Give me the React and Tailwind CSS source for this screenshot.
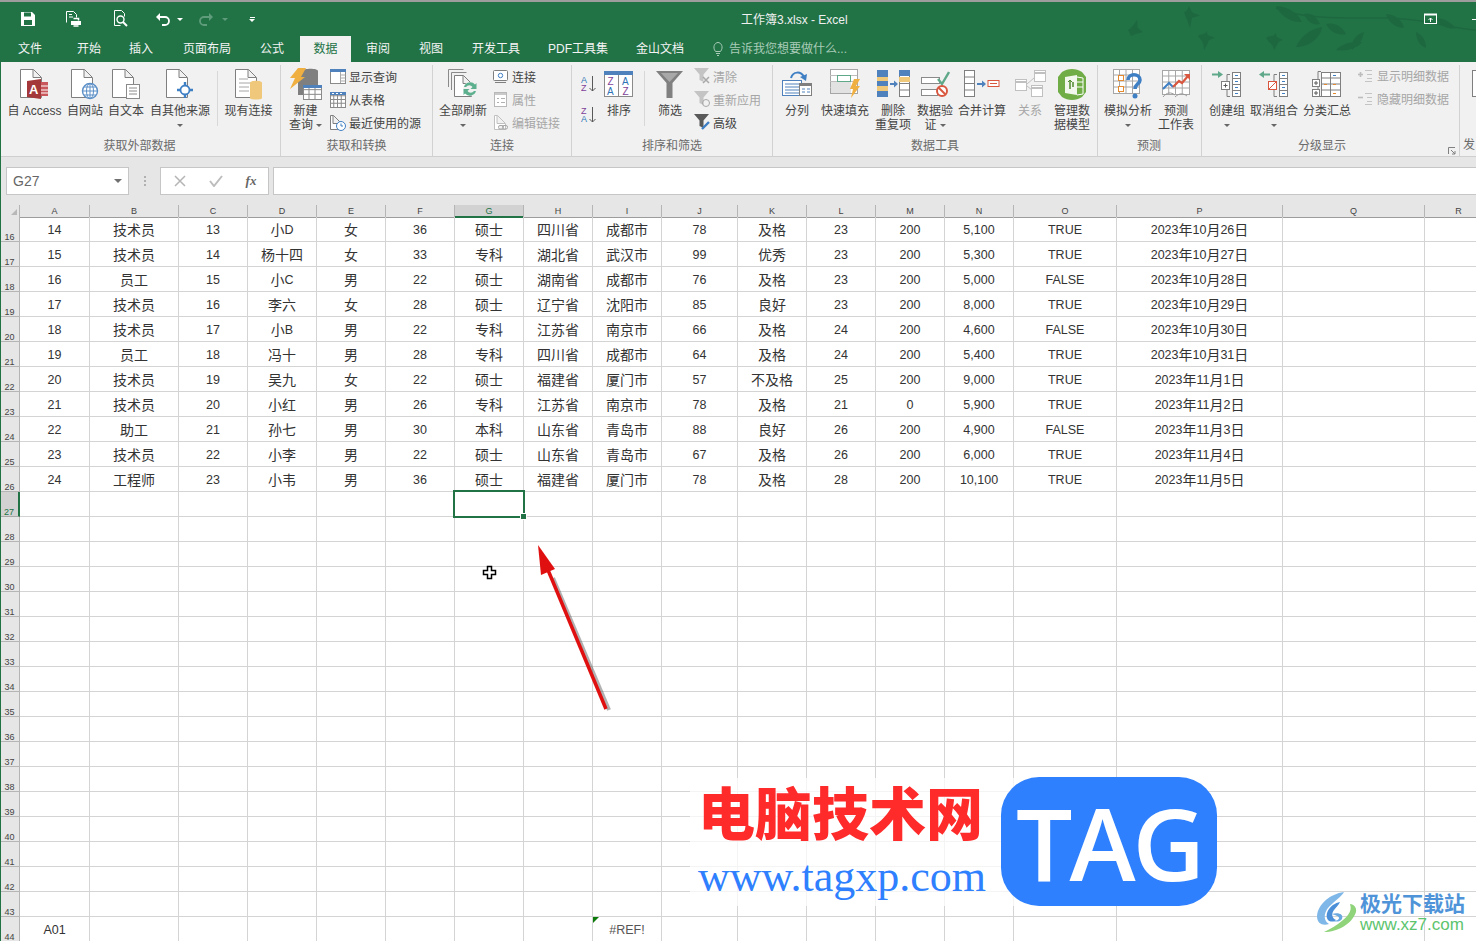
import React from "react";

const rowGrid =
  "grid grid-cols-[20px_70px_89px_69px_69px_69px_69px_69px_69px_69px_76px_69px_69px_69px_69px_103px_166px_142px_68px]";

const headers = ["A", "B", "C", "D", "E", "F", "G", "H", "I", "J", "K", "L", "M", "N", "O", "P", "Q", "R"];

const data = [
  ["14", "技术员", "13", "小D", "女", "36", "硕士", "四川省", "成都市", "78", "及格", "23", "200", "5,100", "TRUE", "2023年10月26日"],
  ["15", "技术员", "14", "杨十四", "女", "33", "专科", "湖北省", "武汉市", "99", "优秀", "23", "200", "5,300", "TRUE", "2023年10月27日"],
  ["16", "员工", "15", "小C", "男", "22", "硕士", "湖南省", "成都市", "76", "及格", "23", "200", "5,000", "FALSE", "2023年10月28日"],
  ["17", "技术员", "16", "李六", "女", "28", "硕士", "辽宁省", "沈阳市", "85", "良好", "23", "200", "8,000", "TRUE", "2023年10月29日"],
  ["18", "技术员", "17", "小B", "男", "22", "专科", "江苏省", "南京市", "66", "及格", "24", "200", "4,600", "FALSE", "2023年10月30日"],
  ["19", "员工", "18", "冯十", "男", "28", "专科", "四川省", "成都市", "64", "及格", "24", "200", "5,400", "TRUE", "2023年10月31日"],
  ["20", "技术员", "19", "吴九", "女", "22", "硕士", "福建省", "厦门市", "57", "不及格", "25", "200", "9,000", "TRUE", "2023年11月1日"],
  ["21", "技术员", "20", "小红", "男", "26", "专科", "江苏省", "南京市", "78", "及格", "21", "0", "5,900", "TRUE", "2023年11月2日"],
  ["22", "助工", "21", "孙七", "男", "30", "本科", "山东省", "青岛市", "88", "良好", "26", "200", "4,900", "FALSE", "2023年11月3日"],
  ["23", "技术员", "22", "小李", "男", "22", "硕士", "山东省", "青岛市", "67", "及格", "26", "200", "6,000", "TRUE", "2023年11月4日"],
  ["24", "工程师", "23", "小韦", "男", "36", "硕士", "福建省", "厦门市", "78", "及格", "28", "200", "10,100", "TRUE", "2023年11月5日"],
];

const rowNumbers = Array.from({ length: 29 }, (_, i) => 16 + i);

// digits are a bit narrower than the chinese in the sheet
function Mixed({ text }) {
  return text.split(/([\u4e00-\u9fff]+)/).map((part, i) =>
    i % 2 ? (
      <span key={i} className="text-[14px]">
        {part}
      </span>
    ) : (
      <span key={i}>{part}</span>
    )
  );
}

function Doc({ x = 0, y = 0, w = 21, h = 28, stroke = "#7f7f7f" }) {
  return (
    <path
      d={`M${x + 0.5} ${y + 0.5}h${w - 8}l8 8v${h - 8}h-${w}z M${x + w - 8} ${y + 0.5}v8h8`}
      fill="#fff"
      stroke={stroke}
    />
  );
}

function TableIcon({ x, y, w, h, cols = 3, rows = 3, head = "#4f81bd", stroke = "#8a8a8a" }) {
  const lines = [];
  for (let i = 1; i < cols; i++) lines.push(<path key={"c" + i} d={`M${x + (w * i) / cols} ${y}v${h}`} stroke={stroke} />);
  for (let i = 1; i < rows; i++) lines.push(<path key={"r" + i} d={`M${x} ${y + (h * i) / rows}h${w}`} stroke={stroke} />);
  return (
    <g>
      <rect x={x + 0.5} y={y + 0.5} width={w} height={h} fill="#fff" stroke={stroke} />
      {lines}
      {head && <rect x={x} y={y} width={w + 1} height={3} fill={head} />}
    </g>
  );
}

const Svg = ({ w, h, children }) => (
  <svg width={w} height={h} viewBox={`0 0 ${w} ${h}`} fill="none" className="block shrink-0">
    {children}
  </svg>
);

const AccessIcon = () => (
  <Svg w={29} h={31}>
    <Doc w={21} h={28} />
    <path d="M21 13h7v14h-7z" fill="#c9565a" />
    <path d="M21 17h7M21 21h7M21 24h7" stroke="#fff" />
    <path d="M7 12l14-2v20l-14-2z" fill="#a4373a" />
    <text x="9" y="25" fontSize="13" fontWeight="700" fill="#fff" fontFamily="Liberation Sans">A</text>
  </Svg>
);
const WebIcon = () => (
  <Svg w={29} h={31}>
    <Doc w={21} h={28} />
    <circle cx="19" cy="22" r="7.5" fill="#fff" stroke="#5b8fc7" strokeWidth="1.4" />
    <path d="M11.5 22h15M19 14.5v15M13 18h12M13 26h12" stroke="#5b8fc7" />
    <ellipse cx="19" cy="22" rx="3.5" ry="7.5" stroke="#5b8fc7" />
  </Svg>
);
const TextIcon = () => (
  <Svg w={29} h={31}>
    <Doc w={21} h={28} />
    <rect x="14.5" y="15.5" width="13" height="14" fill="#fff" stroke="#8a8a8a" />
    <path d="M17 19h8M17 22h8M17 25h8" stroke="#8a8a8a" />
  </Svg>
);
const OtherIcon = () => (
  <Svg w={28} h={31}>
    <Doc w={21} h={28} />
    <circle cx="19" cy="21" r="4.5" fill="#fff" stroke="#3f7fc4" strokeWidth="1.8" />
    <path d="M19 13v4M19 25v4M11 21h4M23 21h4" stroke="#3f7fc4" strokeWidth="2.4" />
  </Svg>
);
const ExistingIcon = () => (
  <Svg w={28} h={31}>
    <Doc w={21} h={28} />
    <path d="M4 10h9M4 14h13M4 18h10M4 22h10" stroke="#a6a6a6" />
    <path d="M15 14c0-3 12-3 12 0v15c0 2-12 2-12 0z" fill="#efc87c" />
  </Svg>
);
const NewQueryIcon = () => (
  <Svg w={33} h={33}>
    <path d="M14 3c0-3 15-3 15 0v24H9V8z" fill="#7f7f7f" />
    <path d="M9 0h8l-5 9h4L1 21l5-11H1z" fill="#f0b041" />
    <TableIcon x={14} y={17} w={18} h={14} cols={3} rows={3} head="#4f81bd" stroke="#8a8a8a" />
  </Svg>
);
const ShowQueryIcon = () => (
  <Svg w={16} h={16}>
    <TableIcon x={0} y={0} w={15} h={14} cols={1} rows={1} />
    <path d="M10.5 3v11M10.5 6h5M10.5 9h5M10.5 12h5" stroke="#aaa" />
  </Svg>
);
const FromTableIcon = () => (
  <Svg w={16} h={16}>
    <TableIcon x={0} y={0} w={15} h={15} cols={4} rows={4} />
    <path d="M2 1.5h2M6 1.5h2M10 1.5h2" stroke="#fff" />
  </Svg>
);
const RecentIcon = () => (
  <Svg w={16} h={16}>
    <Doc w={11} h={14} />
    <circle cx="11" cy="11" r="4.5" fill="#fff" stroke="#3f7fc4" />
    <path d="M11 8.5V11h2" stroke="#3f7fc4" />
  </Svg>
);
const RefreshAllIcon = () => (
  <Svg w={31} h={31}>
    <path d="M.5 18V.5h15M3.5 21V3.5h15" stroke="#8a8a8a" />
    <Doc x={6} y={6} w={17} h={21} />
    <circle cx="22" cy="20" r="7" fill="#f1f1f1" />
    <path d="M16 18a6.5 6.5 0 0 1 11-2.5l1.5-1.5v6h-6l2-2a4 4 0 0 0-6.500 0z" fill="#5cb08e" />
    <path d="M28 22a6.500 6.500 0 0 1-11 2.500l-1.500 1.500v-6h6l-2 2a4 4 0 0 0 6.500 0z" fill="#5cb08e" />
  </Svg>
);
const ConnectIcon = () => (
  <Svg w={16} h={14}>
    <rect x=".5" y=".5" width="14" height="10" rx="1" fill="#fff" stroke="#7f7f7f" />
    <circle cx="7.500" cy="5.500" r="2.200" stroke="#3f7fc4" />
    <path d="M2 12.500h11" stroke="#7f7f7f" />
  </Svg>
);
const PropsIcon = () => (
  <Svg w={16} h={16}>
    <rect x="1.500" y=".5" width="12" height="14" fill="#fff" stroke="#b8b8b8" />
    <rect x="2" y="1" width="11" height="2" fill="#c9c9c9" />
    <path d="M4 6.500h2M8 6.500h4M4 10.500h2M8 10.500h4" stroke="#b0b0b0" />
  </Svg>
);
const EditLinkIcon = () => (
  <Svg w={16} h={16}>
    <Doc x={1} w={11} h={14} stroke="#c0c0c0" />
    <rect x="5.500" y="10.500" width="5" height="3.500" rx="1.500" stroke="#a8a8a8" fill="#f1f1f1" />
    <rect x="9.500" y="10.500" width="5" height="3.500" rx="1.500" stroke="#a8a8a8" />
  </Svg>
);
const SortAzIcon = ({ top, bottom, topC, bottomC }) => (
  <Svg w={16} h={17}>
    <text x="0" y="8" fontSize="9" fontFamily="Liberation Sans" fill={topC}>{top}</text>
    <text x="0" y="16" fontSize="9" fontFamily="Liberation Sans" fill={bottomC}>{bottom}</text>
    <path d="M11.500 1v15M8.500 13l3 3 3-3" stroke="#595959" />
  </Svg>
);
const SortIcon = () => (
  <Svg w={30} h={27}>
    <rect x=".5" y="1.500" width="28" height="24" fill="#fff" stroke="#8a8a8a" />
    <path d="M14.500 1v24" stroke="#8a8a8a" />
    <rect x="0" y="0" width="29" height="4" fill="#4f81bd" />
    <text x="3.500" y="14" fontSize="10" fontFamily="Liberation Sans" fill="#7e3f98">Z</text>
    <text x="3" y="24" fontSize="10" fontFamily="Liberation Sans" fill="#2f74b5">A</text>
    <text x="18" y="14" fontSize="10" fontFamily="Liberation Sans" fill="#2f74b5">A</text>
    <text x="18.500" y="24" fontSize="10" fontFamily="Liberation Sans" fill="#7e3f98">Z</text>
  </Svg>
);
const FunnelIcon = () => (
  <Svg w={28} h={29}>
    <path d="M0 1h27L16.500 13v15h-6V13z" fill="#808080" />
    <path d="M5 3h17l-8.500 9z" fill="#a8a8a8" />
  </Svg>
);
const SmallFunnel = ({ color, children }) => (
  <Svg w={17} h={17}>
    <path d="M0 0h15L9.500 6.500V14l-4-2V6.500z" fill={color} />
    {children}
  </Svg>
);
const SplitIcon = () => (
  <Svg w={31} h={28}>
    <rect x=".5" y="10.500" width="19" height="15" fill="#fff" stroke="#4f81bd" />
    <path d="M3 14h14M3 17h14M3 20h14M3 23h14" stroke="#4f81bd" />
    <rect x="17.500" y="13.500" width="12" height="12" fill="#fff" stroke="#7f7f7f" />
    <rect x="17.500" y="13.500" width="12" height="2.500" fill="#7f7f7f" />
    <path d="M20 19h3M25 19h3M20 22h3M25 22h3" stroke="#4f81bd" />
    <path d="M9 8c2-7 10-7 13-1" stroke="#3f7fc4" strokeWidth="2" />
    <path d="M18 7l6 4 1-7z" fill="#3f7fc4" />
  </Svg>
);
const FlashIcon = () => (
  <Svg w={31} h={30}>
    <rect x=".5" y=".5" width="27" height="24" fill="#fff" stroke="#a6a6a6" />
    <path d="M0 6.500h27M0 12.500h27M0 18.500h27" stroke="#bdbdbd" />
    <rect x="7.500" y="6.500" width="13" height="6" fill="#fff" stroke="#5fa98a" />
    <rect x="1" y="13" width="20" height="11" fill="#e2e2e2" />
    <path d="M24 10h6l-4 7h4L21 29l2-9h-3z" fill="#f0b041" />
  </Svg>
);
const DedupeIcon = () => (
  <Svg w={33} h={28}>
    <rect x="0" y="0" width="11" height="27" fill="#4f81bd" />
    <rect x="0" y="7" width="11" height="4" fill="#f0c87a" />
    <rect x="0" y="16" width="11" height="5" fill="#f0c87a" />
    <rect x="22.500" y=".5" width="10" height="26" fill="#fff" stroke="#7f7f7f" />
    <rect x="22" y="0" width="11" height="6" fill="#4f81bd" />
    <rect x="22" y="7" width="11" height="5" fill="#f0c87a" />
    <path d="M23 13.500h10M23 20h10" stroke="#7f7f7f" />
    <path d="M13 14h5" stroke="#4f81bd" strokeWidth="2" />
    <path d="M17 10.500l4 3.500-4 3.500z" fill="#4f81bd" />
  </Svg>
);
const ValidIcon = () => (
  <Svg w={29} h={27}>
    <rect x=".5" y="6.500" width="18" height="6" fill="#fff" stroke="#8a8a8a" />
    <rect x=".5" y="18.500" width="16" height="6" fill="#fff" stroke="#8a8a8a" />
    <path d="M17 8l4 5L28 1" stroke="#5fa98a" strokeWidth="2.400" />
    <circle cx="21" cy="20" r="5" fill="#fff" stroke="#d9573f" strokeWidth="2" />
    <path d="M17.500 16.500l7 7" stroke="#d9573f" strokeWidth="2" />
  </Svg>
);
const ConsolidateIcon = () => (
  <Svg w={36} h={28}>
    <rect x=".5" y=".5" width="10" height="26" fill="#fff" stroke="#7f7f7f" />
    <path d="M1 7h10M1 13.500h10M1 20h10" stroke="#7f7f7f" />
    <path d="M13 14h6" stroke="#4f81bd" strokeWidth="2" />
    <path d="M18 10.500l4 3.500-4 3.500z" fill="#4f81bd" />
    <rect x="24" y="10.500" width="11" height="6" fill="#fff" stroke="#d9573f" />
    <path d="M26 13.500h7" stroke="#d9573f" />
  </Svg>
);
const RelIcon = () => (
  <Svg w={31} h={28}>
    <g fill="#fff" stroke="#c0c0c0">
      <rect x=".5" y="9.500" width="11" height="11" />
      <rect x="19.500" y=".5" width="11" height="11" />
      <rect x="16.500" y="15.500" width="11" height="11" />
    </g>
    <path d="M1 12h11M20 3h11M17 18h11" stroke="#c0c0c0" strokeWidth="2" />
    <path d="M12 14l7-6M12 16l5 4" stroke="#c0c0c0" />
  </Svg>
);
const ModelIcon = () => (
  <Svg w={30} h={31}>
    <path d="M5 3c6-4 14-4 20 0l4 5v15l-4 5c-6 4-14 4-20 0l-4-5V8z" fill="#70ad47" />
    <path d="M8 8l12-2v20L8 24z" fill="#fff" opacity=".9" />
    <path d="M20 8l6 1v16l-6 1M20 13h6M20 18h6" stroke="#fff" />
    <path d="M13 20v-8M16 18v-5" stroke="#4f8a2f" strokeWidth="1.500" />
    <path d="M11 13l2-2 2 2" stroke="#4f8a2f" />
  </Svg>
);
const WhatIfIcon = () => (
  <Svg w={30} h={31}>
    <TableIcon x={0} y={0} w={26} h={24} cols={4} rows={4} head={null} stroke="#a6a6a6" />
    <rect x="5.500" y="6.500" width="5" height="5" fill="#fff" stroke="#e58a2e" />
    <rect x="5.500" y="17.500" width="5" height="5" fill="#fff" stroke="#e58a2e" />
    <path d="M15 11c0-7 12-7 12 0 0 4-5 4-5 9" stroke="#3f7fc4" strokeWidth="3.600" />
    <circle cx="22" cy="27" r="2.500" fill="#3f7fc4" />
  </Svg>
);
const ForecastIcon = () => (
  <Svg w={29} h={29}>
    <TableIcon x={0} y={0} w={27} h={24} cols={4} rows={4} head={null} stroke="#a6a6a6" />
    <path d="M1 19l6-6 4 4" stroke="#3f7fc4" strokeWidth="2" />
    <path d="M11 17l6-6 3 2 6-7" stroke="#d9573f" strokeWidth="2.200" />
    <path d="M22 4h6v6z" fill="#d9573f" />
    <path d="M1 27c4-5 8-5 12-2M13 27c4-4 8-4 12-1" stroke="#9a9a9a" />
  </Svg>
);
const OutlineCol = () => (
  <g>
    <path d="M18 3.500h-3v22h3" stroke="#7f7f7f" />
    <rect x="20.500" y="1.500" width="8" height="24" fill="#fff" stroke="#7f7f7f" />
    <path d="M21 7.500h8M21 13.500h8M21 19.500h8" stroke="#7f7f7f" />
    <path d="M23 4.500h3M23 10.500h3M23 16.500h3M23 22.500h3" stroke="#3f7fc4" />
  </g>
);
const GroupIcon = () => (
  <Svg w={30} h={27}>
    <OutlineCol />
    <path d="M0 3.500h7" stroke="#5fa98a" strokeWidth="2" />
    <path d="M6 0l5 3.500L6 7z" fill="#5fa98a" />
    <rect x="9.500" y="10.500" width="8" height="8" fill="#fff" stroke="#7f7f7f" />
    <path d="M11.500 14.500h4M13.500 12.500v4" stroke="#595959" />
  </Svg>
);
const UngroupIcon = () => (
  <Svg w={30} h={27}>
    <OutlineCol />
    <path d="M4 3.500h7" stroke="#5fa98a" strokeWidth="2" />
    <path d="M5 0L0 3.500 5 7z" fill="#5fa98a" />
    <rect x="9.500" y="10.500" width="8" height="8" fill="#fff" stroke="#d9573f" />
    <path d="M10 18l7-7" stroke="#d9573f" />
  </Svg>
);
const SubtotalIcon = () => (
  <Svg w={30} h={27}>
    <path d="M9 .5H6v25h3" stroke="#7f7f7f" />
    <TableIcon x={9} y={1} w={19} h={24} cols={2} rows={4} head={null} stroke="#7f7f7f" />
    <rect x=".5" y="8.500" width="7" height="7" fill="#fff" stroke="#7f7f7f" />
    <rect x=".5" y="18.500" width="7" height="7" fill="#fff" stroke="#7f7f7f" />
    <path d="M2 12h4M4 10v4M2 22h4M4 20v4" stroke="#595959" />
    <path d="M21 13.500h3M21 22.500h3M12 13.500h3" stroke="#e58a2e" />
    <path d="M21 4.500h3" stroke="#3f7fc4" />
  </Svg>
);
const DetailIcon = ({ plus }) => (
  <Svg w={15} h={14}>
    <path d="M0 5.500h5" stroke="#bdbdbd" strokeWidth="1.600" />
    {plus && <path d="M2.500 3v5" stroke="#bdbdbd" strokeWidth="1.600" />}
    <path d="M7 1.500h7M9 5.500h5M9 9.500h5M7 12.500h7" stroke="#c4c4c4" />
  </Svg>
);

function Caret() {
  return <span className="inline-block w-0 h-0 border-x-[3px] border-x-transparent border-t-[3px] border-t-[#666] align-middle" />;
}

function Big({ className, icon, lines, caret, dim }) {
  return (
    <div className={`flex flex-col items-center shrink-0 ${className}`}>
      <div className="h-[38px] flex items-center justify-center">{icon}</div>
      <div className={`pt-[1px] text-[12px] leading-[14px] text-center whitespace-nowrap ${dim ? "text-[#a6a6a6]" : "text-[#444]"}`}>
        {lines.map((l, i) => (
          <div key={i}>
            {l}
            {caret === "inline" && i === lines.length - 1 && (
              <span className="ml-[3px]">
                <Caret />
              </span>
            )}
          </div>
        ))}
        {caret === "below" && (
          <div className="leading-[14px]">
            <Caret />
          </div>
        )}
      </div>
    </div>
  );
}

function Small({ icon, label, dim }) {
  return (
    <div className="h-[23px] flex items-center whitespace-nowrap">
      <div className="w-[19px] shrink-0">{icon}</div>
      <span className={`text-[12px] pt-[2px] ${dim ? "text-[#a6a6a6]" : "text-[#444]"}`}>{label}</span>
    </div>
  );
}

function Group({ className, label, labelClass = "", children }) {
  return (
    <div className={`shrink-0 flex flex-col border-r border-[#d2d2d2] ${className}`}>
      <div className="h-[72px] flex">{children}</div>
      <div className={`h-[16px] pt-[1px] leading-[16px] text-[12px] text-[#6b6b6b] text-center whitespace-nowrap ${labelClass}`}>{label}</div>
    </div>
  );
}

const Leaf = ({ d }) => <path d={d} fill="#1e6840" />;

function TitleBar() {
  return (
    <div className="relative h-[34px] flex items-center text-white">
      <div className="w-[741px] shrink-0 flex items-center">
        <div className="ml-[20px]">
          <Svg w={16} h={16}>
            <path d="M1 1h11l3 3v11H1z" fill="#fff" />
            <rect x="4" y="1.500" width="7" height="4" fill="#217346" />
            <rect x="4" y="9" width="8" height="5" fill="#217346" />
          </Svg>
        </div>
        <div className="ml-[28px]">
          <Svg w={18} h={18}>
            <path d="M2.500 12.500V1.500h7l3 3v3" stroke="#fff" />
            <path d="M5 4.500h3M5 7h4" stroke="#fff" />
            <rect x="7" y="11" width="10" height="4" fill="#fff" />
            <path d="M9.500 8.500h5v2M9.500 16h5" stroke="#fff" strokeWidth="1.500" />
          </Svg>
        </div>
        <div className="ml-[30px]">
          <Svg w={17} h={18}>
            <path d="M2.500 15.500V.5h7l3 3v3M2.500 15.500h6" stroke="#fff" />
            <circle cx="8.500" cy="9.500" r="3.500" stroke="#fff" strokeWidth="1.400" />
            <path d="M11 12l4 4" stroke="#fff" strokeWidth="2" />
          </Svg>
        </div>
        <div className="ml-[26px]">
          <Svg w={15} h={14}>
            <path d="M4 5h6a3.500 3.500 0 0 1 0 8H7" stroke="#fff" strokeWidth="1.800" />
            <path d="M5 1L1 5l4 4z" fill="#fff" />
          </Svg>
        </div>
        <div className="ml-[7px] w-0 h-0 border-x-[3px] border-x-transparent border-t-[3px] border-t-white" />
        <div className="ml-[16px]">
          <Svg w={15} h={14}>
            <path d="M11 5H5a3.500 3.500 0 0 0 0 8h3" stroke="#5f9c7b" strokeWidth="1.800" />
            <path d="M10 1l4 4-4 4z" fill="#5f9c7b" />
          </Svg>
        </div>
        <div className="ml-[8px] w-0 h-0 border-x-[3px] border-x-transparent border-t-[3px] border-t-[#5f9c7b]" />
        <div className="ml-[21px] flex flex-col items-center gap-[1px]">
          <div className="w-[5px] h-[1px] bg-white" />
          <div className="w-0 h-0 border-x-[3px] border-x-transparent border-t-[3px] border-t-white" />
        </div>
      </div>
      <span className="pt-[2px] text-[12px] text-[#f0f0f0]">工作簿3.xlsx - Excel</span>
      {/* background art of the office theme */}
      <svg width="350" height="60" viewBox="0 0 350 60" className="absolute left-[1126px] top-0 pointer-events-none">
        <Leaf d="M2 28c4-2 6-6 9-10 1 4 0 6 1 8l5 4c-5 1-9 3-12 4z" />
        <Leaf d="M58 10c3 0 4-4 5-6 2 4 3 8 8 8l3 2c-3 0-5 1-8 2l-2 10c-2-4-2-8-4-10z" />
        <Leaf d="M72 34c3-3 6 0 9-5 0 3 1 5 4 5l4 2c-4 1-7 2-7 5l-4 7c0-4-1-8-3-10z" />
        <Leaf d="M140 36c3-3 6 0 10-5 0 3 1 4 3 5l4 2c-3 1-5 2-6 5l-3 5c-1-4-2-6-5-8z" />
        <Leaf d="M150 4c8 0 20 4 26 16-10 1-22-6-26-16z" />
        <Leaf d="M178 12c6-2 12 2 16 10-8 2-14-4-16-10z" />
        <Leaf d="M170 45c4-10 14-18 26-20-1 10-12 20-26 20z" />
        <Leaf d="M200 22c8-2 16 2 20 10-8 2-16-2-20-10z" />
        <Leaf d="M238 30c-2 10-4 10-12 18-2-8 4-16 12-18z" />
        <Leaf d="M210 48c8-8 16-8 26-8-4 6-16 10-26 8z" />
        <Leaf d="M260 12c6 0 16 4 18 14-8 0-16-6-18-14z" />
        <Leaf d="M290 30c4 2 10 6 10 16-6-2-10-8-10-16z" />
        <Leaf d="M310 16c8 0 14 4 20 10-8 2-16-2-20-10z" />
        <path d="M150 6c30 12 70 10 110 10s60 10 90 12" stroke="#1e6840" strokeWidth="1.500" fill="none" />
      </svg>
      <div className="absolute left-[1424px] top-[10px]">
        <Svg w={14} h={14}>
          <rect x=".5" y="2.500" width="12" height="9" stroke="#fff" />
          <path d="M0 2.500h13" stroke="#fff" strokeWidth="2" />
          <path d="M6.500 10V6M4.500 8l2-2 2 2" stroke="#fff" />
        </Svg>
      </div>
      <div className="absolute right-0 top-[17px] w-[4px] h-[1px] bg-white" />
    </div>
  );
}

function Tab({ className, children, active }) {
  return (
    <div
      className={`shrink-0 h-full flex items-center justify-center text-[12px] ${className} ${
        active ? "bg-[#f1f1f1] text-[#217346]" : "text-[#f4f4f4]"
      }`}
    >
      {children}
    </div>
  );
}

function TabBar() {
  return (
    <div className="h-[26px] flex">
      <Tab className="w-[60px]">文件</Tab>
      <Tab className="w-[58px]">开始</Tab>
      <Tab className="w-[46px]">插入</Tab>
      <Tab className="w-[86px]">页面布局</Tab>
      <Tab className="w-[44px]">公式</Tab>
      <div className="w-[6px] shrink-0" />
      <Tab className="w-[51px]" active>
        数据
      </Tab>
      <Tab className="w-[54px]">审阅</Tab>
      <Tab className="w-[52px]">视图</Tab>
      <Tab className="w-[78px]">开发工具</Tab>
      <Tab className="w-[86px]">PDF工具集</Tab>
      <Tab className="w-[78px]">金山文档</Tab>
      <div className="ml-[14px] flex items-center gap-[6px] text-[12px] text-[#a9cbb7]">
        <Svg w={10} h={14}>
          <path d="M2.500 9.500C-1 5 2 .5 5 .5S11 5 7.500 9.500zM3 11.500h4M4 13.500h2" stroke="#a9cbb7" />
        </Svg>
        <span>告诉我您想要做什么...</span>
      </div>
    </div>
  );
}

function Ribbon() {
  return (
    <div className="h-[95px] bg-[#f1f1f1] border-b border-[#cfcfcf] pt-[3px] flex overflow-hidden">
      <Group className="w-[281px] pl-[4px]" label="获取外部数据" labelClass="pr-[5px]">
        <Big className="w-[61px]" icon={<AccessIcon />} lines={["自 Access"]} />
        <Big className="w-[40px]" icon={<WebIcon />} lines={["自网站"]} />
        <Big className="w-[42px]" icon={<TextIcon />} lines={["自文本"]} />
        <Big className="w-[66px]" icon={<OtherIcon />} lines={["自其他来源"]} caret="below" />
        <div className="w-[9px] shrink-0 flex justify-center pt-[6px]">
          <div className="w-px h-[55px] bg-[#d8d8d8]" />
        </div>
        <Big className="w-[53px]" icon={<ExistingIcon />} lines={["现有连接"]} />
      </Group>
      <Group className="w-[152px]" label="获取和转换">
        <Big className="w-[49px]" icon={<NewQueryIcon />} lines={["新建", "查询"]} caret="inline" />
        <div>
          <Small icon={<ShowQueryIcon />} label="显示查询" />
          <Small icon={<FromTableIcon />} label="从表格" />
          <Small icon={<RecentIcon />} label="最近使用的源" />
        </div>
      </Group>
      <Group className="w-[139px]" label="连接">
        <Big className="w-[60px]" icon={<RefreshAllIcon />} lines={["全部刷新"]} caret="below" />
        <div>
          <Small icon={<ConnectIcon />} label="连接" />
          <Small icon={<PropsIcon />} label="属性" dim />
          <Small icon={<EditLinkIcon />} label="编辑链接" dim />
        </div>
      </Group>
      <Group className="w-[201px]" label="排序和筛选">
        <div className="w-[30px] shrink-0 pl-[9px] pt-[10px] flex flex-col gap-[14px]">
          <SortAzIcon top="A" bottom="Z" topC="#2f74b5" bottomC="#7e3f98" />
          <SortAzIcon top="Z" bottom="A" topC="#7e3f98" bottomC="#2f74b5" />
        </div>
        <Big className="w-[34px]" icon={<SortIcon />} lines={["排序"]} />
        <div className="w-[16px] shrink-0 flex justify-center pt-[6px]">
          <div className="w-px h-[55px] bg-[#d8d8d8]" />
        </div>
        <Big className="w-[36px]" icon={<FunnelIcon />} lines={["筛选"]} />
        <div className="ml-[6px]">
          <Small
            icon={
              <SmallFunnel color="#c4c4c4">
                <path d="M9 9l6 6M15 9l-6 6" stroke="#a8a8a8" strokeWidth="1.500" />
              </SmallFunnel>
            }
            label="清除"
            dim
          />
          <Small
            icon={
              <SmallFunnel color="#c4c4c4">
                <circle cx="12" cy="12" r="3.500" stroke="#a8a8a8" />
              </SmallFunnel>
            }
            label="重新应用"
            dim
          />
          <Small
            icon={
              <SmallFunnel color="#595959">
                <path d="M8 15l7-7" stroke="#3f7fc4" strokeWidth="2.400" />
              </SmallFunnel>
            }
            label="高级"
          />
        </div>
      </Group>
      <Group className="w-[325px]" label="数据工具">
        <Big className="w-[48px]" icon={<SplitIcon />} lines={["分列"]} />
        <Big className="w-[48px]" icon={<FlashIcon />} lines={["快速填充"]} />
        <Big className="w-[48px]" icon={<DedupeIcon />} lines={["删除", "重复项"]} />
        <Big className="w-[36px]" icon={<ValidIcon />} lines={["数据验", "证"]} caret="inline" />
        <Big className="w-[58px]" icon={<ConsolidateIcon />} lines={["合并计算"]} />
        <Big className="w-[38px]" icon={<RelIcon />} lines={["关系"]} dim />
        <Big className="w-[46px]" icon={<ModelIcon />} lines={["管理数", "据模型"]} />
      </Group>
      <Group className="w-[104px] pl-[3px]" label="预测" labelClass="pr-[4px]">
        <Big className="w-[54px]" icon={<WhatIfIcon />} lines={["模拟分析"]} caret="below" />
        <Big className="w-[42px]" icon={<ForecastIcon />} lines={["预测", "工作表"]} />
      </Group>
      <Group className="w-[258px] pl-[5px] relative" label="分级显示" labelClass="pr-[22px]">
        <Big className="w-[40px]" icon={<GroupIcon />} lines={["创建组"]} caret="below" />
        <Big className="w-[54px]" icon={<UngroupIcon />} lines={["取消组合"]} caret="below" />
        <Big className="w-[52px]" icon={<SubtotalIcon />} lines={["分类汇总"]} />
        <div className="ml-[5px] -mt-[1px]">
          <Small icon={<DetailIcon plus />} label="显示明细数据" dim />
          <Small icon={<DetailIcon />} label="隐藏明细数据" dim />
        </div>
        <div className="absolute right-[3px] bottom-[1px]">
          <Svg w={8} h={8}>
            <path d="M.5 7V.5H7M3 3l4 4M7 4v3H4" stroke="#808080" />
          </Svg>
        </div>
      </Group>
      <div className="shrink-0 flex flex-col pl-[3px]">
        <div className="h-[72px] pl-[9px] pt-[5px]">
          <div className="w-[10px] h-[27px] border border-[#7f7f7f] bg-white" />
        </div>
        <div className="text-[12px] leading-[16px] text-[#6b6b6b]">发</div>
      </div>
    </div>
  );
}

function FormulaBar() {
  return (
    <div className="h-[48px] bg-[#e6e6e6] pt-[10px] pl-[6px] flex items-start">
      <div className="w-[123px] h-[28px] bg-white border border-[#c6c6c6] flex items-center justify-between pl-[6px] pr-[6px]">
        <span className="text-[14px] text-[#666]">G27</span>
        <div className="w-0 h-0 border-x-[4px] border-x-transparent border-t-[4px] border-t-[#707070]" />
      </div>
      <div className="w-[31px] shrink-0 h-[28px] flex flex-col items-center justify-center gap-[2px]">
        <div className="w-[2px] h-[2px] bg-[#b0b0b0]" />
        <div className="w-[2px] h-[2px] bg-[#b0b0b0]" />
        <div className="w-[2px] h-[2px] bg-[#b0b0b0]" />
      </div>
      <div className="w-[109px] h-[28px] bg-white border border-[#c6c6c6] flex items-center text-[#b0b0b0]">
        <div className="w-[37px] flex justify-center">
          <Svg w={12} h={12}>
            <path d="M1 1l10 10M11 1L1 11" stroke="#b5b5b5" strokeWidth="1.500" />
          </Svg>
        </div>
        <div className="w-[36px] flex justify-center">
          <Svg w={14} h={12}>
            <path d="M1 6l4 5 8-10" stroke="#bdbdbd" strokeWidth="2" />
          </Svg>
        </div>
        <div className="w-[34px] text-center font-['Liberation_Serif',serif] italic font-bold text-[13px] text-[#666]">fx</div>
      </div>
      <div className="ml-[4px] flex-1 h-[28px] bg-white border border-[#c6c6c6] border-r-0" />
    </div>
  );
}

function SheetGrid() {
  return (
    <div className="w-[1496px]">
      <div className={`${rowGrid} h-[12px] bg-[#e6e6e6] border-b border-[#9c9c9c] box-content -mb-px`}>
        <div className="border-r border-[#b5b5b5] relative">
          <div className="absolute right-[2px] bottom-[2px] w-0 h-0 border-l-[6px] border-l-transparent border-b-[6px] border-b-[#b8b8b8]" />
        </div>
        {headers.map((h) => (
          <div
            key={h}
            className={`border-r border-[#b5b5b5] text-center text-[9px] leading-[12px] text-[#444] ${
              h === "G" ? "bg-[#d2d2d2] text-[#217346] relative" : ""
            }`}
          >
            {h}
            {h === "G" && <div className="absolute left-0 right-0 bottom-[-1px] h-[2px] bg-[#217346]" />}
          </div>
        ))}
      </div>
      {rowNumbers.map((n, r) => {
        const row = data[r];
        return (
          <div key={n} className={`${rowGrid} h-[25px]`}>
            <div
              className={`border-b border-r text-[9px] text-center leading-[8px] pt-[16px] ${
                n === 27 ? "bg-[#d2d2d2] text-[#217346] border-[#217346] border-r-2 border-b-[#a8a8a8]" : "bg-[#e6e6e6] text-[#444] border-[#b5b5b5]"
              }`}
            >
              {n}
            </div>
            {headers.map((h, c) => {
              let text = row ? row[c] : "";
              if (n === 44 && h === "A") text = "A01";
              if (n === 44 && h === "I") text = "#REF!";
              return (
                <div
                  key={h}
                  className={`relative border-r border-b border-[#d4d4d4] flex items-center justify-center pt-[2px] text-[12.500px] text-[#333] whitespace-nowrap ${
                    n === 44 && h === "I" ? "text-[11px] text-[#555]" : ""
                  }`}
                >
                  {text && <Mixed text={text} />}
                  {n === 44 && h === "I" && (
                    <div className="absolute left-0 top-0 w-0 h-0 border-t-[6px] border-t-[#0b7a0b] border-r-[6px] border-r-transparent" />
                  )}
                  {n === 27 && h === "G" && (
                    <div className="absolute -left-[2px] -top-[2px] w-[72px] h-[28px] border-2 border-[#217346] z-10">
                      <div className="absolute -right-[3px] -bottom-[3px] w-[5px] h-[5px] bg-[#217346] border border-white box-content -m-px" />
                    </div>
                  )}
                </div>
              );
            })}
          </div>
        );
      })}
    </div>
  );
}

function Overlays() {
  return (
    <>
      {/* red arrow drawn on the screenshot */}
      <svg width="90" height="180" viewBox="0 0 90 180" className="absolute left-[530px] top-[540px] pointer-events-none">
        <path d="M79 170L23 38" stroke="#555" strokeWidth="4" opacity=".45" />
        <path d="M76 169L18 30" stroke="#e01010" strokeWidth="3.500" />
        <path d="M8 5l17 24-14 6z" fill="#e01010" />
      </svg>
      {/* mouse pointer */}
      <svg width="16" height="16" viewBox="0 0 16 16" className="absolute left-[482px] top-[565px] pointer-events-none">
        <path d="M5.500 1.500h4v4h4v4h-4v4h-4v-4h-4v-4h4z" fill="#fff" stroke="#000" strokeWidth="1.500" />
      </svg>
      {/* site watermark */}
      <div className="absolute left-[690px] top-[778px] w-[330px] h-[128px] bg-white/75 flex flex-col pl-[8px]">
        <div className="font-['Noto_Sans_CJK_SC',sans-serif] font-black text-[57px] leading-[66px] -mt-[1px] text-[#ff2b2b] whitespace-nowrap">电脑技术网</div>
        <div className="font-['Liberation_Serif',serif] text-[44px] leading-[44px] mt-[12px] text-[#2f80ff] whitespace-nowrap">www.tagxp.com</div>
      </div>
      <div className="absolute left-[1001px] top-[777px] w-[216px] h-[129px] rounded-[38px] bg-[#2f80ff] flex items-center justify-center font-['Open_Sans',sans-serif] font-semibold text-[100px] leading-none text-white tracking-[-3px]">
        TAG
      </div>
      <svg width="46" height="44" viewBox="0 0 46 44" className="absolute left-[1316px] top-[890px] pointer-events-none">
        <path d="M28 2C14 4 2 14 1 26c0 8 6 10 12 8C6 30 8 20 16 14 20 10 26 6 28 2z" fill="#7fb8e8" />
        <path d="M24 12c-10 2-16 12-12 18 2 2 6 2 8 0-4-2-5-6-2-10 2-3 5-5 6-8z" fill="#4a8fd8" />
        <path d="M8 42c14 0 28-8 32-20 1-4-2-8-6-8 3 8-4 14-12 20-6 4-10 6-14 8z" fill="#8fd47a" />
        <path d="M16 24c6-2 12 0 10 5-2 3-6 3-9 2 3 0 6-1 6-3s-4-3-7-4z" fill="#6aa8e0" />
      </svg>
      <div className="absolute left-[1360px] top-[888px] flex flex-col">
        <span className="font-['Noto_Sans_CJK_SC',sans-serif] font-bold text-[21px] leading-[28px] text-[#4f94d8] whitespace-nowrap">极光下载站</span>
        <span className="font-['Liberation_Sans',sans-serif] text-[17px] leading-[18px] text-[#5cc46e] whitespace-nowrap">www.xz7.com</span>
      </div>
    </>
  );
}

export default function App() {
  return (
    <div className="relative w-[1476px] h-[941px] overflow-hidden bg-white font-['Liberation_Sans','Noto_Sans_CJK_SC',sans-serif]">
      <div className="h-[2px] bg-[#9d9d9d]" />
      <div className="bg-[#217346]">
        <TitleBar />
        <TabBar />
      </div>
      <Ribbon />
      <FormulaBar />
      <SheetGrid />
      <div className="absolute left-0 top-[2px] bottom-0 w-px bg-[#217346]" />
      <Overlays />
    </div>
  );
}
